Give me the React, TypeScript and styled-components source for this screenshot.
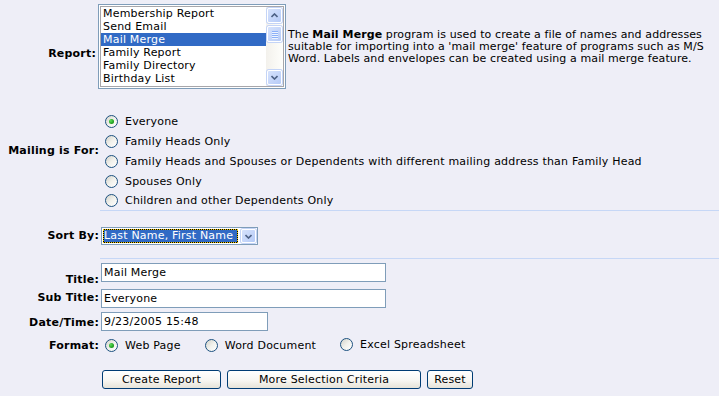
import styled, { createGlobalStyle } from 'styled-components';

const GlobalStyle = createGlobalStyle`
  html, body {
    margin: 0;
    padding: 0;
    background: #eeeef7;
  }
  body {
    font-family: "DejaVu Sans", Verdana, sans-serif;
    font-size: 11px;
    letter-spacing: 0.2px;
    color: #000;
  }
`;

const REPORTS = ['Membership Report', 'Send Email', 'Mail Merge', 'Family Report', 'Family Directory', 'Birthday List'];

const MAILING = [
  'Everyone',
  'Family Heads Only',
  'Family Heads and Spouses or Dependents with different mailing address than Family Head',
  'Spouses Only',
  'Children and other Dependents Only',
];

const FORMATS = ['Web Page', 'Word Document', 'Excel Spreadsheet'];

const Page = styled.div`
  width: 719px;
  height: 396px;
  padding-top: 4px;
  box-sizing: border-box;
  overflow: hidden;
`;

const Form = styled.div`
  display: grid;
  grid-template-columns: 100px 1fr;
`;

const Label = styled.div<{ $align?: 'center' | 'end' | 'start'; $top?: number; $right?: number }>`
  font-weight: bold;
  text-align: right;
  line-height: 13px;
  white-space: nowrap;
  align-self: ${(p) => p.$align ?? 'center'};
  margin-top: ${(p) => p.$top ?? 0}px;
  padding-right: ${(p) => p.$right ?? 1}px;
`;

const ReportCell = styled.div`
  display: flex;
  align-items: center;
`;

const ListBox = styled.div`
  display: flex;
  width: 188px;
  height: 85px;
  margin-left: -2px;
  padding: 1px;
  box-sizing: border-box;
  border: 1px solid #7f9db9;
  background: #fff;
  flex-shrink: 0;
`;

const ListInner = styled.div`
  flex: 1;
  display: flex;
  border: 1px solid #a7a6aa;
`;

const Options = styled.ul`
  flex: 1;
  margin: 0;
  padding: 0;
  list-style: none;
`;

const Option = styled.li<{ $selected?: boolean }>`
  height: 13px;
  line-height: 13px;
  padding-left: 2px;
  white-space: nowrap;
  background: ${(p) => (p.$selected ? '#316ac5' : 'transparent')};
  color: ${(p) => (p.$selected ? '#fff' : '#000')};
`;

const ScrollBar = styled.div`
  width: 17px;
  display: flex;
  flex-direction: column;
  background: linear-gradient(to right, #f3f1ec, #fefefb);
`;

const ScrollButton = styled.div`
  height: 15px;
  margin: 1px;
  box-sizing: border-box;
  border: 1px solid #fff;
  border-radius: 2px;
  background: linear-gradient(135deg, #d6e2fc, #b6cbf7);
  box-shadow: 0 0 0 1px #c4d4f7;
  display: flex;
  align-items: center;
  justify-content: center;
`;

const Track = styled.div`
  flex: 1;
  padding-top: 1px;
`;

const Thumb = styled(ScrollButton)`
  height: 16px;
  flex-direction: column;
  gap: 1px;
`;

const Grip = styled.span`
  width: 6px;
  height: 1px;
  background: #8cb0f8;
  box-shadow: 0 1px 0 #eef4fe;
`;

const Description = styled.p`
  margin: 0 0 0 2px;
  line-height: 12px;
  white-space: nowrap;
  letter-spacing: 0.1px;
`;

const MailingCell = styled.div`
  padding-top: 22px;
  border-bottom: 1px solid #c6d7f6;
`;

const RadioRow = styled.label`
  display: flex;
  align-items: center;
  height: 20px;
  white-space: nowrap;
  &:last-child {
    height: 19px;
  }
`;

const Radio = styled.span<{ $checked?: boolean }>`
  position: relative;
  width: 13px;
  height: 13px;
  margin: 0 7px 0 5px;
  flex-shrink: 0;
  box-sizing: border-box;
  border: 1px solid #1c5180;
  border-radius: 50%;
  background: linear-gradient(135deg, #d2d2ca 0%, #f1f1ec 50%, #ffffff 100%);

  &::after {
    content: '';
    display: ${(p) => (p.$checked ? 'block' : 'none')};
    position: absolute;
    left: 3px;
    top: 3px;
    width: 5px;
    height: 5px;
    border-radius: 50%;
    background: radial-gradient(circle at 35% 35%, #5ede5a, #21a121 60%, #158a15);
  }
`;

const SortCell = styled.div`
  padding: 16px 0 13px 1px;
  border-bottom: 1px solid #c6d7f6;
`;

const Select = styled.div`
  display: flex;
  align-items: center;
  width: 157px;
  height: 18px;
  padding: 1px;
  box-sizing: border-box;
  border: 1px solid #7f9db9;
  background: #fff;
`;

const SelectValue = styled.span`
  flex: 1;
  height: 14px;
  line-height: 14px;
  padding-left: 1px;
  white-space: nowrap;
  overflow: hidden;
  color: #fff;
  background: #316ac5;
  outline: 1px dotted #f0c800;
  outline-offset: -1px;
  box-shadow: inset 0 0 0 1px #000;
`;

const DropButton = styled.span`
  width: 15px;
  height: 14px;
  margin-left: 3px;
  flex-shrink: 0;
  box-sizing: border-box;
  border: 1px solid #fff;
  border-radius: 2px;
  background: linear-gradient(135deg, #d6e2fc, #b6cbf7);
  box-shadow: 0 0 0 1px #c4d4f7;
  display: flex;
  align-items: center;
  justify-content: center;
`;

const InputCell = styled.div<{ $top: number; $bottom: number }>`
  padding: ${(p) => p.$top}px 0 ${(p) => p.$bottom}px 1px;
`;

const TextInput = styled.input<{ $width: number }>`
  display: block;
  width: ${(p) => p.$width}px;
  height: 19px;
  margin: 0;
  padding: 0 2px;
  box-sizing: border-box;
  border: 1px solid #7f9db9;
  background: #fff;
  font-family: inherit;
  font-size: 11px;
  letter-spacing: inherit;
  color: #000;
  outline: none;
`;

const FormatCell = styled.div`
  display: flex;
  height: 20px;
`;

const FormatOption = styled(RadioRow)`
  margin-right: 19px;
`;

const ButtonCell = styled.div`
  display: flex;
  gap: 6px;
  margin-top: 15px;
  padding-left: 2px;
`;

const Button = styled.button<{ $width: number }>`
  height: 19px;
  width: ${(p) => p.$width}px;
  margin: 0;
  padding: 0;
  box-sizing: border-box;
  border: 1px solid #003c74;
  border-radius: 3px;
  background: linear-gradient(to bottom, #ffffff 0%, #f7f6f2 55%, #e6e3d8 100%);
  font-family: inherit;
  font-size: 11px;
  letter-spacing: inherit;
  line-height: 15px;
  color: #000;
`;

const Chevron = ({ up }: { up?: boolean }) => (
  <svg width="7" height="5" viewBox="0 0 7 5">
    <polyline
      points={up ? '0.5,4 3.5,1 6.5,4' : '0.5,1 3.5,4 6.5,1'}
      fill="none"
      stroke="#4d6185"
      strokeWidth="1.6"
    />
  </svg>
);

export default function App() {
  return (
    <>
      <GlobalStyle />
      <Page>
        <Form>
          <Label $align="start" $top={43} $right={4}>
            Report:
          </Label>
          <ReportCell>
            <ListBox>
              <ListInner>
                <Options>
                  {REPORTS.map((r) => (
                    <Option key={r} $selected={r === 'Mail Merge'}>
                      {r}
                    </Option>
                  ))}
                </Options>
                <ScrollBar>
                  <ScrollButton>
                    <Chevron up />
                  </ScrollButton>
                  <Track>
                    <Thumb>
                      <Grip />
                      <Grip />
                      <Grip />
                      <Grip />
                    </Thumb>
                  </Track>
                  <ScrollButton>
                    <Chevron />
                  </ScrollButton>
                </ScrollBar>
              </ListInner>
            </ListBox>
            <Description>
              The <b>Mail Merge</b> program is used to create a file of names and addresses
              <br />
              suitable for importing into a 'mail merge' feature of programs such as M/S
              <br />
              Word. Labels and envelopes can be created using a mail merge feature.
            </Description>
          </ReportCell>

          <Label>Mailing is For:</Label>
          <MailingCell>
            {MAILING.map((m, i) => (
              <RadioRow key={m}>
                <Radio $checked={i === 0} />
                {m}
              </RadioRow>
            ))}
          </MailingCell>

          <Label>Sort By:</Label>
          <SortCell>
            <Select>
              <SelectValue>Last Name, First Name</SelectValue>
              <DropButton>
                <Chevron />
              </DropButton>
            </Select>
          </SortCell>

          <Label $align="end">Title:</Label>
          <InputCell $top={4} $bottom={4}>
            <TextInput $width={285} defaultValue="Mail Merge" />
          </InputCell>

          <Label>Sub Title:</Label>
          <InputCell $top={3} $bottom={1}>
            <TextInput $width={285} defaultValue="Everyone" />
          </InputCell>

          <Label>Date/Time:</Label>
          <InputCell $top={3} $bottom={4}>
            <TextInput $width={167} defaultValue="9/23/2005 15:48" />
          </InputCell>

          <Label>Format:</Label>
          <FormatCell>
            {FORMATS.map((f, i) => (
              <FormatOption key={f}>
                <Radio $checked={i === 0} />
                {f}
              </FormatOption>
            ))}
          </FormatCell>

          <span />
          <ButtonCell>
            <Button $width={119}>Create Report</Button>
            <Button $width={194}>More Selection Criteria</Button>
            <Button $width={46}>Reset</Button>
          </ButtonCell>
        </Form>
      </Page>
    </>
  );
}
